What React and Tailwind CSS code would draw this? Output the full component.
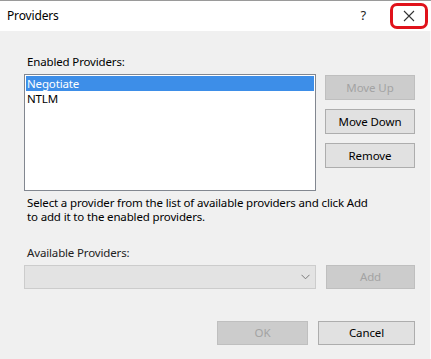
import React from "react";

const font = { fontFamily: '"Noto Sans", "Open Sans", sans-serif' };

function Btn({ children, disabled, className = "" }) {
  return (
    <div
      className={
        "flex items-center justify-center border text-[11.5px] tracking-[-0.1px] " +
        (disabled
          ? "bg-[#cccccc] border-[#bfbfbf] text-[#a3a3a3] "
          : "bg-[#e1e1e1] border-[#adadad] text-black ") +
        className
      }
    >
      {children}
    </div>
  );
}

export default function App() {
  return (
    <div className="w-[431px] h-[359px] overflow-hidden flex flex-col bg-[#f0f0f0] border-t border-[#9a9a9a] text-[11.5px] tracking-[-0.15px]" style={font}>
      <div className="h-[30px] bg-white flex items-center shrink-0">
        <span className="ml-[7px] text-[12px] text-black">Providers</span>
        <span className="ml-auto mr-[24px] text-[13px] text-[#222]">?</span>
        <div className="mr-[3px] w-[38px] h-[26px] border-[3px] border-[#e0121b] rounded-[7px] flex items-center justify-center">
          <svg width="12" height="12" viewBox="0 0 12 12">
            <path d="M1 1 L11 11 M11 1 L1 11" stroke="#333" strokeWidth="1.1" fill="none" />
          </svg>
        </div>
      </div>
      <div className="flex-1 flex flex-col pl-[24px] pr-[15px] border-r border-[#fafafa]">
        <div className="mt-[23px] ml-[3px] leading-[16px] text-black">Enabled Providers:</div>
        <div className="mt-[4px] flex">
          <div className="w-[292px] h-[117px] bg-white border border-[#828790] p-[1px]">
            <div className="h-[15px] leading-[15px] bg-[#3d8ee8] text-white pl-[1px]">Negotiate</div>
            <div className="h-[15px] leading-[15px] text-black pl-[1px]">NTLM</div>
          </div>
          <div className="ml-[9px] flex flex-col gap-[9px] pt-[1px]">
            <Btn disabled className="w-[90px] h-[25px]">Move Up</Btn>
            <Btn className="w-[90px] h-[25px]">Move Down</Btn>
            <Btn className="w-[90px] h-[25px]">Remove</Btn>
          </div>
        </div>
        <div className="mt-[5px] ml-[3px] leading-[14px] text-black">
          Select a provider from the list of available providers and click Add
          <br />
          to add it to the enabled providers.
        </div>
        <div className="mt-[21px] ml-[3px] leading-[16px] text-[#222]">Available Providers:</div>
        <div className="mt-[4px] flex">
          <div className="w-[292px] h-[24px] bg-[#e3e3e3] border border-[#cccccc] flex items-center justify-end pr-[5px]">
            <svg width="9" height="6" viewBox="0 0 9 6">
              <path d="M0.5 0.8 L4.5 4.8 L8.5 0.8" stroke="#7a7a7a" strokeWidth="1" fill="none" />
            </svg>
          </div>
          <Btn disabled className="ml-[10px] w-[89px] h-[24px]">Add</Btn>
        </div>
        <div className="mt-[32px] flex justify-end">
          <Btn disabled className="w-[91px] h-[24px]">OK</Btn>
          <Btn className="ml-[10px] w-[97px] h-[24px]">Cancel</Btn>
        </div>
      </div>
    </div>
  );
}
